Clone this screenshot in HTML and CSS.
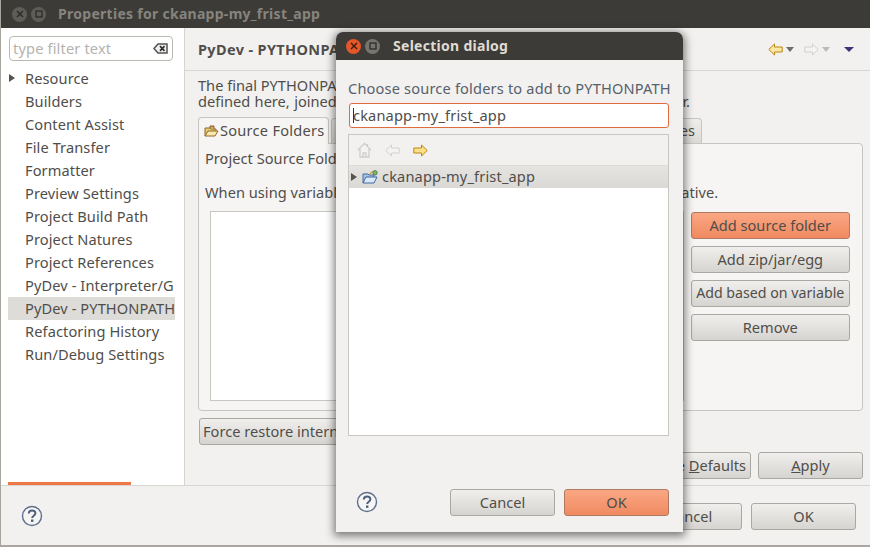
FILE: index.html
```html
<!DOCTYPE html>
<html lang="en">
<head>
    <meta charset="UTF-8">
    <title>Properties for ckanapp-my_frist_app</title>
    <link rel="stylesheet" href="styles.css">
</head>
<body>
    <div class="window">
        <div class="titlebar">
            <span class="win-btn">
                <svg width="8" height="8" viewBox="0 0 8 8"><path d="M1 1l6 6M7 1l-6 6" stroke="#2e2c28" stroke-width="1.5"/></svg>
            </span>
            <span class="win-btn">
                <svg width="8" height="8" viewBox="0 0 8 8"><rect x="1" y="1" width="6" height="6" fill="none" stroke="#2e2c28" stroke-width="1.3"/></svg>
            </span>
            <span class="win-title">Properties for ckanapp-my_frist_app</span>
        </div>

        <div class="main">
            <div class="sidebar">
                <div class="filter">
                    <span class="filter-text">type filter text</span>
                    <svg width="15" height="11" viewBox="0 0 15 11"><path d="M5 1h9v9H5L1 5.500z" fill="#f2f1f0" stroke="#55534f" stroke-width="1.500"/><path d="M7 3.200l4.500 4.600M11.500 3.200L7 7.800" stroke="#33312e" stroke-width="1.800"/></svg>
                </div>
                <ul class="tree">
                    <li class="has-arrow">Resource</li>
                    <li>Builders</li>
                    <li>Content Assist</li>
                    <li>File Transfer</li>
                    <li>Formatter</li>
                    <li>Preview Settings</li>
                    <li>Project Build Path</li>
                    <li>Project Natures</li>
                    <li>Project References</li>
                    <li>PyDev - Interpreter/G</li>
                    <li class="selected">PyDev - PYTHONPATH</li>
                    <li>Refactoring History</li>
                    <li>Run/Debug Settings</li>
                </ul>
                <div class="scroll-track"><div class="scroll-thumb"></div></div>
            </div>

            <div class="content">
                <div class="page-head">
                    <h1>PyDev - PYTHONPATH</h1>
                    <div class="nav-icons">
                        <svg width="15" height="13" viewBox="0 0 15 13"><path d="M.8 6.500L6.500 1v3h7.700v5H6.500v3z" fill="#fbe7a4" stroke="#bb8712"/></svg>
                        <span class="caret"></span>
                        <svg class="next" width="15" height="13" viewBox="0 0 15 13"><path d="M14.200 6.500L8.500 1v3H.8v5h7.700v3z" fill="#f4f3f2" stroke="#d2d0cc"/></svg>
                        <span class="caret faded"></span>
                        <span class="caret menu"></span>
                    </div>
                </div>
                <div class="intro">
                    <p>The final PYTHONPATH used for a launch is composed of the paths</p>
                    <p class="intro-end">defined here, joined with the paths defined for the selected interpreter.</p>
                </div>

                <div class="tabs">
                    <div class="tab active">
                        <svg width="15" height="13" viewBox="0 0 15 13"><path d="M1 11V3h5l1 1h5v2" fill="#e9c877" stroke="#8a6a28"/><path d="M1 11l3-5h10l-3 5z" fill="#fbe6ae" stroke="#8a6a28"/><path d="M6 3V1h4v3" fill="#d9a766" stroke="#8a5a2c"/></svg><span class="tab-label">Source Folders</span>
                    </div>
                    <div class="tab second">External Libraries</div>
                    <div class="tab third">String Substitution Variables</div>
                </div>
                <div class="tab-panel">
                    <p class="panel-line">Project Source Folders (added to PYTHONPATH).</p>
                    <p class="panel-line gap">When using variables, the final paths resolved must be workspace-relative.</p>
                    <div class="panel-body">
                        <div class="folder-list"></div>
                        <div class="side-buttons">
                            <button class="btn hot">Add source folder</button>
                            <button class="btn">Add zip/jar/egg</button>
                            <button class="btn tight">Add based on variable</button>
                            <button class="btn">Remove</button>
                        </div>
                    </div>
                </div>
                <div class="force-row">
                    <button class="btn force">Force restore internal info</button>
                </div>
                <div class="apply-row">
                    <button class="btn">Restore <u>D</u>efaults</button>
                    <button class="btn wide"><u>A</u>pply</button>
                </div>
            </div>
        </div>

        <div class="footer">
            <svg width="22" height="22" viewBox="0 0 22 22"><circle cx="11" cy="11" r="9.500" fill="#f6f5f4" stroke="#5c6f8e" stroke-width="1.400"/><path d="M7.800 8.600c0-4.200 6.600-4.200 6.600-.3 0 2.500-3.200 2.400-3.200 4.700" fill="none" stroke="#4d5f7e" stroke-width="2"/><rect x="10" y="14.500" width="2.400" height="2.400" fill="#4d5f7e"/></svg>
            <div class="footer-buttons">
                <button class="btn wide">Cancel</button>
                <button class="btn wide">OK</button>
            </div>
        </div>

        <!-- selection dialog, sits over the properties window -->
        <div class="dialog">
            <div class="titlebar dialog-bar">
                <span class="win-btn close">
                    <svg width="8" height="8" viewBox="0 0 8 8"><path d="M1 1l6 6M7 1l-6 6" stroke="#3d1a0c" stroke-width="1.400"/></svg>
                </span>
                <span class="win-btn lighter">
                    <svg width="8" height="8" viewBox="0 0 8 8"><rect x="1" y="1" width="6" height="6" fill="none" stroke="#2e2c28" stroke-width="1.300"/></svg>
                </span>
                <span class="win-title">Selection dialog</span>
            </div>
            <div class="dialog-body">
                <p class="dialog-label">Choose source folders to add to PYTHONPATH</p>
                <div class="dialog-input"><span class="cursor"></span>ckanapp-my_frist_app</div>
                <div class="picker">
                    <div class="picker-tools">
                        <svg width="15" height="16" viewBox="0 0 15 16"><path d="M1 8l6.500-6.500L14 8M3 7v8h9V7M6 15v-4h3v4M10.500 2v3" fill="#f4f3f2" stroke="#cfcdc9" stroke-width="1.300"/></svg>
                        <svg width="15" height="13" viewBox="0 0 15 13"><path d="M.8 6.500L6.500 1v3h7.700v5H6.500v3z" fill="#f4f3f2" stroke="#d2d0cc"/></svg>
                        <svg width="15" height="13" viewBox="0 0 15 13"><path d="M14.200 6.500L8.500 1v3H.8v5h7.700v3z" fill="#fbe08a" stroke="#bb8712"/></svg>
                    </div>
                    <div class="picker-row">
                        <span class="arrow"></span>
                        <svg width="16" height="15" viewBox="0 0 16 15"><path d="M1 13V4h5l1 1h5v2" fill="#a9c4e6" stroke="#3f6aa3"/><path d="M1 13l3-6h11l-3 6z" fill="#dbe8f7" stroke="#3f6aa3"/><path d="M8 4.500c.5-2 2.500-3 4.500-3" fill="none" stroke="#c9a033" stroke-width="1.200"/><circle cx="13" cy="2.800" r="2.200" fill="#7db36a" stroke="#47753c" stroke-width=".8"/></svg>
                        <span class="picker-name">ckanapp-my_frist_app</span>
                    </div>
                </div>
                <div class="dialog-foot">
                    <svg class="dialog-help" width="22" height="22" viewBox="0 0 22 22"><circle cx="11" cy="11" r="9.500" fill="#f6f5f4" stroke="#5c6f8e" stroke-width="1.400"/><path d="M7.800 8.600c0-4.200 6.600-4.200 6.600-.3 0 2.500-3.200 2.400-3.200 4.700" fill="none" stroke="#4d5f7e" stroke-width="2"/><rect x="10" y="14.500" width="2.400" height="2.400" fill="#4d5f7e"/></svg>
                    <div class="footer-buttons">
                        <button class="btn wide">Cancel</button>
                        <button class="btn wide hot">OK</button>
                    </div>
                </div>
            </div>
        </div>
    </div>
</body>
</html>
```

FILE: styles.css
```css
html, body {
    margin: 0;
    padding: 0;
}
body {
    font-family: "Noto Sans", "Open Sans", sans-serif;
    font-size: 14.6px;
    color: #504e4a;
}
.window {
    position: relative;
    width: 870px;
    height: 547px;
    display: flex;
    flex-direction: column;
    overflow: hidden;
    background-color: #f2f1f0;
    border-left: 1px solid #a8a69f;
    border-bottom: 2px solid #a8a69f;
    box-sizing: border-box;
}
p, h1, ul {
    margin: 0;
    padding: 0;
}

/* title bars */
.titlebar {
    flex: none;
    height: 28px;
    display: flex;
    align-items: center;
    padding-left: 11px;
    gap: 4px;
    background-color: #3d3b37;
}
.win-btn {
    width: 15px;
    height: 15px;
    border-radius: 50%;
    display: flex;
    align-items: center;
    justify-content: center;
    background-color: #5f5d58;
}
.win-title {
    margin: 0 0 2px 8px;
    font-weight: bold;
    font-size: 14px;
    letter-spacing: .28px;
    color: #86847e;
}
.dialog-bar {
    border-radius: 7px 7px 0 0;
    padding-left: 10px;
}
.dialog-bar .win-title {
    margin-left: 9px;
    color: #dfdbd2;
}
.close {
    background-color: #e2582a;
}
.lighter {
    background-color: #77756f;
}

/* left tree */
.main {
    flex: 1;
    display: flex;
    min-height: 0;
}
.sidebar {
    flex: none;
    width: 183px;
    border-right: 1px solid #d6d4d0;
    background-color: #fff;
    display: flex;
    flex-direction: column;
}
.filter {
    margin: 8px 0 0 8px;
    width: 164px;
    height: 25px;
    box-sizing: border-box;
    border: 1px solid #bcb9b3;
    border-radius: 4px;
    display: flex;
    align-items: center;
    justify-content: space-between;
    padding: 0 4px 0 3px;
    color: #b5b3ae;
}
.filter-text {
    margin-bottom: 2px;
    letter-spacing: .15px;
}
.tree {
    list-style: none;
    margin-top: 6px;
    flex: 1;
    letter-spacing: .1px;
}
.tree li {
    height: 23px;
    line-height: 23px;
    padding-left: 17px;
    margin: 0 9px 0 7px;
    white-space: nowrap;
    overflow: hidden;
    position: relative;
}
.tree .selected {
    background-color: #dedcd8;
}
.has-arrow::before {
    content: "";
    position: absolute;
    left: 1px;
    top: 7px;
    border-left: 6px solid #55534f;
    border-top: 4px solid transparent;
    border-bottom: 4px solid transparent;
}
.scroll-track {
    height: 3px;
    padding-left: 7px;
}
.scroll-thumb {
    width: 123px;
    height: 3px;
    background-color: #f07746;
}

/* right page */
.content {
    flex: 1;
    min-width: 0;
    display: flex;
    flex-direction: column;
    padding: 0 7px 0 13px;
    overflow: hidden;
}
.page-head {
    flex: none;
    height: 42px;
    margin: 0 -7px 0 -13px;
    padding: 0 16px 0 13px;
    display: flex;
    align-items: center;
    justify-content: space-between;
    border-bottom: 1px solid #d8d6d2;
}
.page-head h1 {
    font-size: 14.5px;
    font-weight: bold;
    letter-spacing: .35px;
}
.nav-icons {
    display: flex;
    align-items: center;
}
.next {
    margin-left: 10px;
}
.caret {
    width: 0;
    height: 0;
    margin-left: 3px;
    border-top: 5px solid #6f6d69;
    border-left: 4px solid transparent;
    border-right: 4px solid transparent;
}
.caret.faded {
    border-top-color: #bdbbb7;
}
.caret.menu {
    margin-left: 14px;
    border-top-color: #3c3579;
    border-left-width: 5px;
    border-right-width: 5px;
}
.intro {
    flex: none;
    margin-top: 6px;
    line-height: 16px;
    white-space: nowrap;
}
.intro-end {
    width: 492px;
    text-align-last: justify;
}
.tabs {
    flex: none;
    margin-top: 8px;
    display: flex;
    height: 26px;
    position: relative;
}
.tab {
    box-sizing: border-box;
    height: 25px;
    margin-top: 1px;
    padding: 0 6px;
    line-height: 23px;
    white-space: nowrap;
    overflow: hidden;
    border: 1px solid #c7c5c0;
    border-bottom: none;
    border-radius: 4px 4px 0 0;
    background: linear-gradient(#efeeec, #dcdad6);
}
.tab.active {
    height: 27px;
    margin-top: 0;
    margin-right: 2px;
    padding: 0 0 0 5px;
    width: 131px;
    line-height: 25px;
    background: #f6f5f4;
}
.tab.active svg {
    vertical-align: -2px;
}
.tab-label {
    margin-left: 1px;
    letter-spacing: .25px;
}
.tab.second {
    width: 150px;
}
.tab.third {
    width: 221px;
    text-align: right;
}
.tab-panel {
    flex: none;
    height: 268px;
    box-sizing: border-box;
    padding: 2px 12px 0 6px;
    border: 1px solid #c7c5c0;
    border-radius: 0 4px 4px 4px;
    background-color: #f6f5f4;
}
.panel-line {
    line-height: 24px;
    white-space: nowrap;
    letter-spacing: .03px;
}
.panel-line.gap {
    margin-top: 10px;
}
.panel-body {
    display: flex;
    margin-top: 7px;
    gap: 7px;
}
.folder-list {
    box-sizing: border-box;
    width: 475px;
    height: 190px;
    margin-left: 5px;
    background-color: #fff;
    border: 1px solid #c9c7c2;
}
.side-buttons {
    display: flex;
    flex-direction: column;
    gap: 7px;
    width: 160px;
    margin-top: 1px;
}
.btn {
    box-sizing: border-box;
    height: 27px;
    padding: 0 4px 2px;
    font: inherit;
    color: #504e4a;
    white-space: nowrap;
    border: 1px solid #aaa8a3;
    border-radius: 3px;
    background: linear-gradient(#f0efed, #d6d4d0);
}
.btn.hot {
    background: linear-gradient(#faa784, #f08a60);
    border-color: #b07a62;
}
.btn.tight {
    padding: 0 0 2px;
    font-size: 14.2px;
}
.btn.wide {
    width: 105px;
}
.force-row {
    margin-top: 7px;
    padding-left: 1px;
}
.btn.force {
    width: 300px;
    padding-left: 3px;
    text-align: left;
}
.apply-row {
    margin-top: 7px;
    display: flex;
    justify-content: flex-end;
    gap: 7px;
}
.footer {
    flex: none;
    height: 60px;
    box-sizing: border-box;
    border-top: 1px solid #d8d6d2;
    display: flex;
    align-items: center;
    justify-content: space-between;
    padding: 0 14px 0 20px;
}
.footer-buttons {
    display: flex;
    gap: 9px;
}
.footer .footer-buttons {
    margin-top: 2px;
}

/* dialog */
.dialog {
    position: absolute;
    left: 335px;
    top: 32px;
    width: 347px;
    height: 500px;
    display: flex;
    flex-direction: column;
    background-color: #f2f1f0;
    border-radius: 7px 7px 0 0;
    box-shadow: 0 2px 8px 2px rgba(0, 0, 0, .5);
}
.dialog-body {
    flex: 1;
    display: flex;
    flex-direction: column;
    padding: 0 14px 0 12px;
}
.dialog-label {
    margin-top: 18px;
    line-height: 20px;
    white-space: nowrap;
    letter-spacing: .17px;
    color: #56606c;
}
.dialog-input {
    margin: 5px 0 0 1px;
    height: 25px;
    box-sizing: border-box;
    line-height: 23px;
    padding-left: 3px;
    letter-spacing: .15px;
    background-color: #fff;
    border: 1px solid #e06b3f;
    border-radius: 3px;
    position: relative;
    white-space: nowrap;
}
.cursor {
    position: absolute;
    left: 3px;
    top: 4px;
    width: 1px;
    height: 15px;
    background-color: #333;
}
.picker {
    margin-top: 6px;
    height: 300px;
    display: flex;
    flex-direction: column;
    border: 1px solid #c9c7c2;
    background-color: #fff;
}
.picker-tools {
    flex: none;
    height: 30px;
    display: flex;
    align-items: center;
    gap: 13px;
    padding-left: 8px;
    background-color: #f2f1f0;
    border-bottom: 1px solid #dedcd8;
}
.picker-row {
    flex: none;
    height: 22px;
    display: flex;
    align-items: center;
    padding-left: 2px;
    letter-spacing: .15px;
    background: linear-gradient(#e6e4e1, #dbd9d5);
}
.arrow {
    width: 0;
    height: 0;
    margin-right: 5px;
    border-left: 6px solid #55534f;
    border-top: 4px solid transparent;
    border-bottom: 4px solid transparent;
}
.picker-name {
    margin: 0 0 2px 4px;
}
.dialog-foot {
    flex: 1;
    display: flex;
    align-items: flex-end;
    justify-content: space-between;
    padding-bottom: 16px;
    padding-left: 8px;
}
.dialog-help {
    margin-bottom: 3px;
}
```
